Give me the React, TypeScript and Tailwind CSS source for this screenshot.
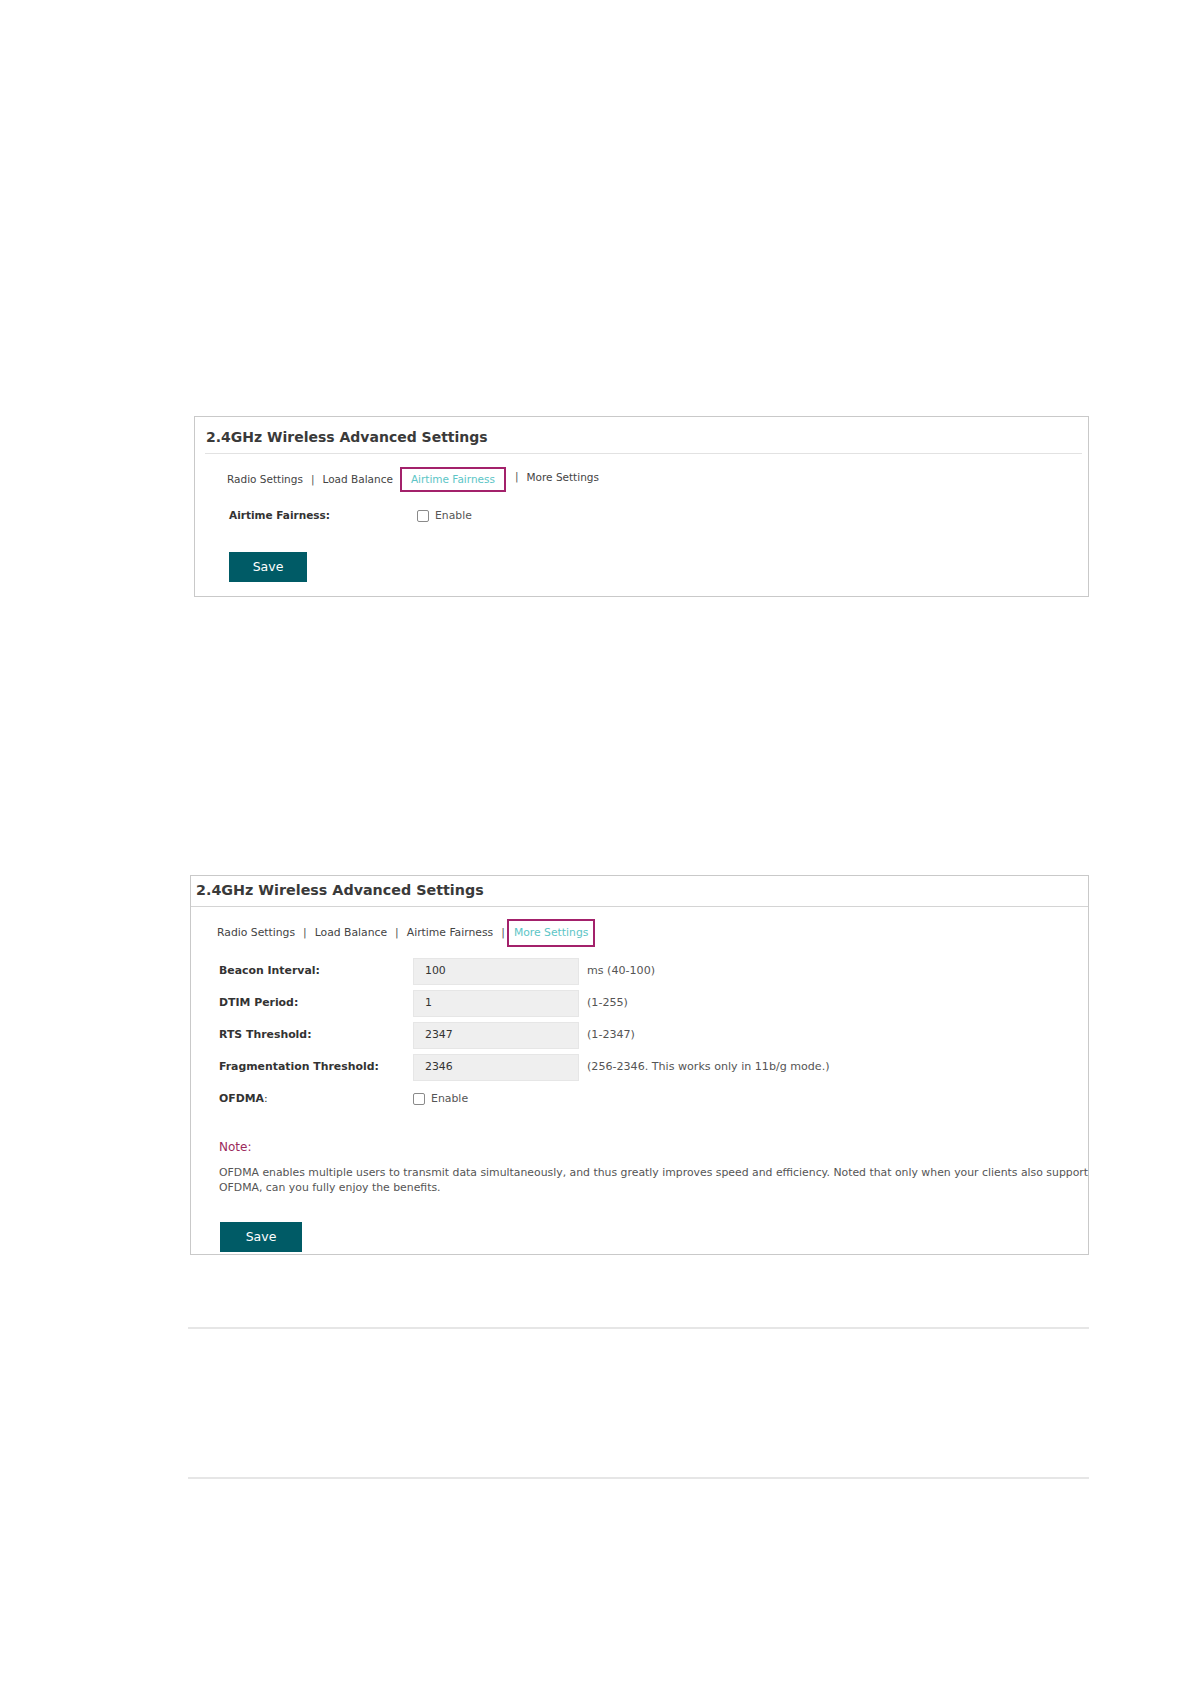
import React from 'react'

const font = { fontFamily: '"DejaVu Sans", Verdana, sans-serif' }

function Sep({ className = '' }: { className?: string }) {
  return <span className={`mx-[8px] text-[#555] ${className}`}>|</span>
}

function Checkbox() {
  return <span className="inline-block w-[12px] h-[12px] border border-[#8a8a8a] rounded-[2px] bg-white" />
}

function SaveButton({ w }: { w: string }) {
  return (
    <button className={`${w} h-[30px] bg-[#005b66] text-white text-[12.5px] flex items-center justify-center`}>
      Save
    </button>
  )
}

const rows = [
  { label: 'Beacon Interval:', value: '100', hint: 'ms (40-100)' },
  { label: 'DTIM Period:', value: '1', hint: '(1-255)' },
  { label: 'RTS Threshold:', value: '2347', hint: '(1-2347)' },
  { label: 'Fragmentation Threshold:', value: '2346', hint: '(256-2346. This works only in 11b/g mode.)' },
]

export default function App() {
  return (
    <div className="w-[1191px] h-[1684px] bg-white pt-[416px]" style={font}>
      {/* panel: airtime fairness */}
      <div className="ml-[194px] w-[895px] h-[181px] border border-[#c9c9c9] flex flex-col">
        <div className="h-[36px] flex items-center pl-[11px] pt-[5px]">
          <h2 className="text-[14px] font-bold text-[#3a3a3a]">2.4GHz Wireless Advanced Settings</h2>
        </div>
        <div className="ml-[10px] mr-[6px] h-px bg-[#e2e2e2]" />
        <div className="mt-[13px] h-[25px] pl-[32px] flex items-center text-[10.5px] text-[#444]">
          <span>Radio Settings</span>
          <Sep />
          <span>Load Balance</span>
          <span className="ml-[7px] h-[25px] px-[9px] border-2 border-[#a3216b] text-[#5cc5c6] flex items-center">
            Airtime Fairness
          </span>
          <Sep className="-translate-y-[3px] ml-[9px]" />
          <span className="-translate-y-[2px]">More Settings</span>
        </div>
        <div className="mt-[14px] h-[20px] pl-[34px] flex items-center">
          <span className="w-[188px] text-[10.5px] font-bold text-[#333]">Airtime Fairness:</span>
          <span className="flex items-center gap-[6px] text-[10.8px] text-[#555]">
            <Checkbox />
            Enable
          </span>
        </div>
        <div className="mt-[26px] pl-[34px]">
          <SaveButton w="w-[78px]" />
        </div>
      </div>

      {/* panel: more settings */}
      <div className="mt-[278px] ml-[190px] w-[899px] h-[380px] border border-[#c9c9c9] flex flex-col overflow-visible">
        <div className="h-[30px] flex items-center pl-[5px]">
          <h2 className="text-[14.3px] font-bold text-[#3a3a3a]">2.4GHz Wireless Advanced Settings</h2>
        </div>
        <div className="h-px bg-[#d4d4d4]" />
        <div className="mt-[12px] h-[28px] pl-[26px] flex items-center text-[10.8px] text-[#444]">
          <span>Radio Settings</span>
          <Sep />
          <span>Load Balance</span>
          <Sep />
          <span>Airtime Fairness</span>
          <Sep className="mr-[2px]" />
          <span className="h-[28px] px-[5px] border-2 border-[#a3216b] text-[#5cc5c6] flex items-center">
            More Settings
          </span>
        </div>
        <div className="mt-[11px] flex flex-col gap-[5px]">
          {rows.map((r) => (
            <div key={r.label} className="h-[27px] flex items-center pl-[28px]">
              <span className="w-[194px] text-[10.9px] font-bold text-[#333]">{r.label}</span>
              <span className="w-[166px] h-[27px] bg-[#efefef] border border-[#e6e6e6] flex items-center pl-[11px] text-[10.9px] text-[#333]">
                {r.value}
              </span>
              <span className="ml-[8px] text-[11.1px] text-[#555]">{r.hint}</span>
            </div>
          ))}
        </div>
        <div className="mt-[8px] h-[20px] pl-[28px] flex items-center">
          <span className="w-[194px] text-[10.9px] text-[#333]">
            <b>OFDMA</b>:
          </span>
          <span className="flex items-center gap-[6px] text-[10.9px] text-[#555]">
            <Checkbox />
            Enable
          </span>
        </div>
        <div className="mt-[28px] h-[20px] pl-[28px] flex items-center text-[12px] text-[#9c2a5c]">Note:</div>
        <p className="mt-[8px] pl-[28px] text-[10.87px] leading-[15px] text-[#555] whitespace-nowrap">
          OFDMA enables multiple users to transmit data simultaneously, and thus greatly improves speed and efficiency. Noted that only when your clients also support
          <br />
          OFDMA, can you fully enjoy the benefits.
        </p>
        <div className="mt-[27px] pl-[29px]">
          <SaveButton w="w-[82px]" />
        </div>
      </div>

      <div className="mt-[72px] ml-[188px] w-[901px] h-[2px] bg-[#e6e6e6]" />
      <div className="mt-[148px] ml-[188px] w-[901px] h-[2px] bg-[#e6e6e6]" />
    </div>
  )
}
